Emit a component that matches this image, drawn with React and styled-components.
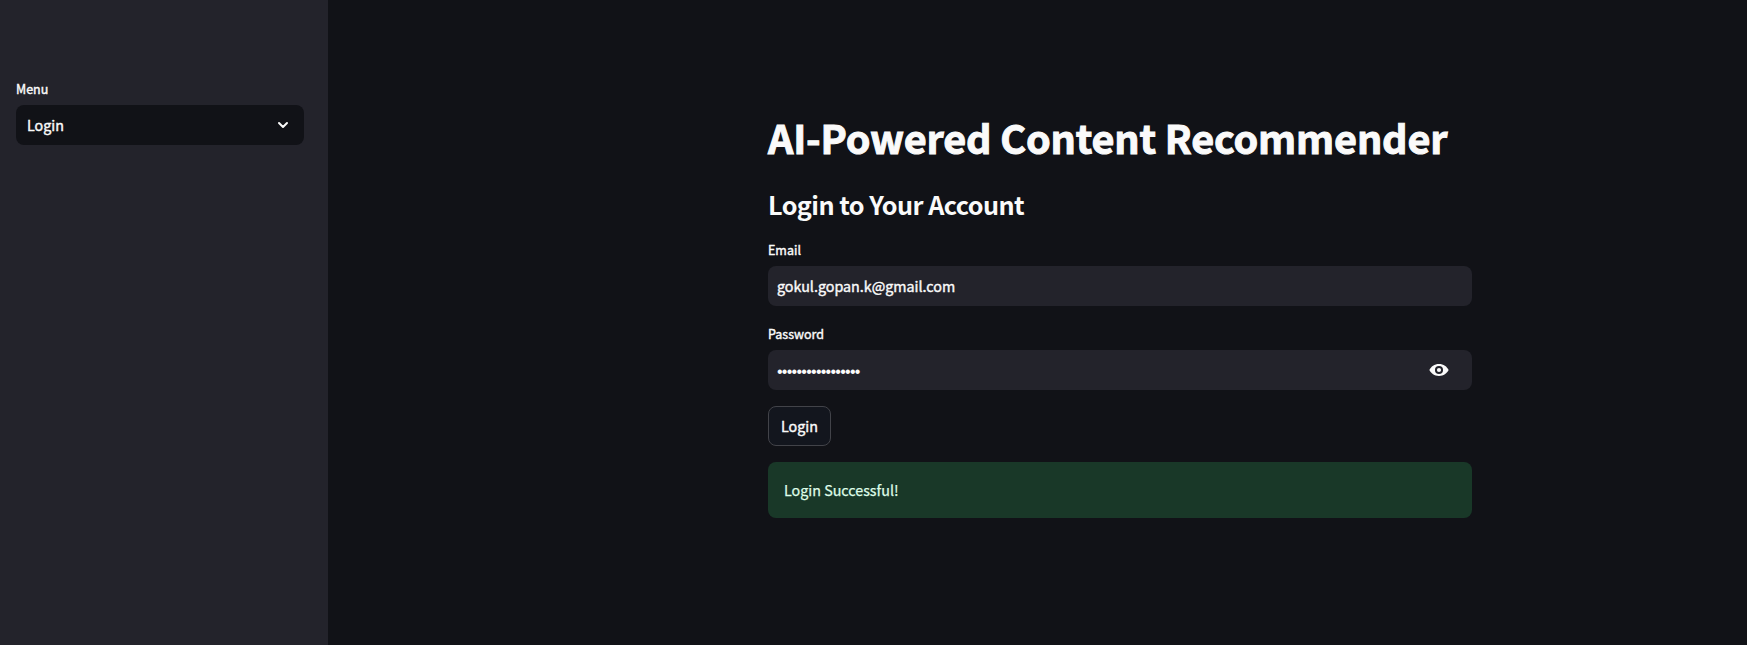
import React from "react";
import styled, { createGlobalStyle } from "styled-components";

const Global = createGlobalStyle`
  *, *::before, *::after { box-sizing: border-box; }
  body {
    margin: 0;
    background: #111217;
    color: #fafafa;
    font-family: "Noto Sans CJK SC", sans-serif;
    -webkit-text-stroke: 0.4px currentColor;
    overflow: hidden;
  }
`;

const Layout = styled.div`
  display: flex;
  height: 645px;
`;

const Sidebar = styled.aside`
  width: 328px;
  flex: none;
  background: #23232b;
  padding: 76px 24px 0 16px;
`;

const Main = styled.main`
  flex: 1;
  display: flex;
  justify-content: center;
  padding: 106px 7px 0;
`;

const Column = styled.div`
  width: 704px;
  margin-left: 165px;
  flex: none;
`;

const Title = styled.h1`
  margin: 0;
  height: 62px;
  line-height: 62px;
  font-size: 39.6px;
  font-weight: 700;
  letter-spacing: -0.17px;
  white-space: nowrap;
  -webkit-text-stroke-width: 1px;
`;

const Subtitle = styled.h2`
  margin: 17px 0 0;
  height: 38px;
  line-height: 38px;
  font-size: 25.2px;
  font-weight: 700;
  letter-spacing: -0.54px;
  white-space: nowrap;
  -webkit-text-stroke-width: 0;
`;

const Label = styled.label`
  display: block;
  height: 29px;
  line-height: 26px;
  font-size: 12.5px;
`;

const Field = styled.div`
  margin-top: ${({ $gap }) => $gap}px;
`;

const Control = styled.div`
  display: flex;
  align-items: center;
  justify-content: space-between;
  height: 40px;
  border-radius: 8px;
  font-size: 14.3px;
  line-height: 24px;
`;

const Select = styled(Control)`
  background: #111217;
  padding: 0 13px 0 11px;
`;

const Input = styled(Control)`
  background: #23232b;
  padding: 0 22px 0 9px;
`;

const Mask = styled.span`
  padding-top: 4px;
  font-family: "Liberation Sans", sans-serif;
  font-size: 16px;
  letter-spacing: -0.74px;
  -webkit-text-stroke-width: 0;
`;

const Button = styled.button`
  display: block;
  width: 63px;
  height: 40px;
  margin: 16px 0;
  padding: 0;
  border: 1px solid #424349;
  border-radius: 8px;
  background: #13161e;
  color: #fafafa;
  font: 400 14.3px/24px "Noto Sans CJK SC", sans-serif;
  -webkit-text-stroke: 0.4px currentColor;
`;

const Alert = styled.div`
  height: 56px;
  padding: 16px;
  border-radius: 8px;
  background: #193828;
  color: #dffde9;
  font-size: 14.3px;
  line-height: 24px;
  -webkit-text-stroke-width: 0.25px;
`;

const ChevronIcon = () => (
  <svg width="16" height="16" viewBox="0 0 16 16" fill="none" stroke="#fafafa" strokeWidth="2" strokeLinecap="round" strokeLinejoin="round">
    <path d="M4 6l4 4 4-4" />
  </svg>
);

const EyeIcon = () => (
  <svg width="22" height="22" viewBox="0 0 24 24" fill="#fafafa">
    <path d="M12 5.5C7 5.5 3.3 8.4 1.5 12c1.8 3.6 5.5 6.5 10.5 6.5s8.7-2.9 10.5-6.5C20.7 8.4 17 5.5 12 5.5zM12 16.4a4.4 4.4 0 1 1 0-8.8 4.4 4.4 0 0 1 0 8.8z" />
    <circle cx="12" cy="12" r="2.3" />
  </svg>
);

export default function App() {
  return (
    <>
      <Global />
      <Layout>
        <Sidebar>
          <Label>Menu</Label>
          <Select>
            <span>Login</span>
            <ChevronIcon />
          </Select>
        </Sidebar>
        <Main>
          <Column>
            <Title>AI-Powered Content Recommender</Title>
            <Subtitle>Login to Your Account</Subtitle>
            <Field $gap={14}>
              <Label>Email</Label>
              <Input>gokul.gopan.k@gmail.com</Input>
            </Field>
            <Field $gap={15}>
              <Label>Password</Label>
              <Input>
                <Mask>{"•".repeat(17)}</Mask>
                <EyeIcon />
              </Input>
            </Field>
            <Button>Login</Button>
            <Alert>Login Successful!</Alert>
          </Column>
        </Main>
      </Layout>
    </>
  );
}
